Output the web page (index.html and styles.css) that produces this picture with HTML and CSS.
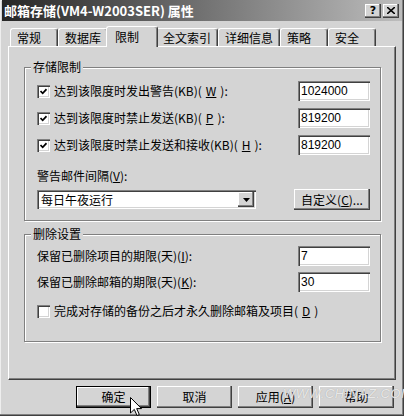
FILE: index.html
```html
<!DOCTYPE html>
<html>
<head lang="zh-CN">
  <meta charset="UTF-8">
  <title>邮箱存储 属性</title>
  <link rel="stylesheet" href="styles.css">
</head>
<body>
  <div class="window">
    <div class="titlebar">
      <span class="title">邮箱存储(VM4-W2003SER) 属性</span>
      <div class="cbtns">
        <span class="cbtn">?</span>
        <span class="cbtn">
          <svg width="8" height="7" viewBox="0 0 8 7"><path d="M0 0 L8 7 M8 0 L0 7" stroke="#000" stroke-width="1.6"/></svg>
        </span>
      </div>
    </div>

    <div class="content">
      <div class="tabs">
        <div class="tab">常规</div>
        <div class="tab">数据库</div>
        <div class="tab active">限制</div>
        <div class="tab">全文索引</div>
        <div class="tab">详细信息</div>
        <div class="tab">策略</div>
        <div class="tab">安全</div>
      </div>

      <div class="panel">
        <fieldset class="group limits">
          <legend>存储限制</legend>
          <div class="row">
            <label class="check"><span class="box"><svg width="7" height="7" viewBox="0 0 7 7"><path d="M0.5 3 L2.7 5.3 L6.5 1.2" fill="none" stroke="#000" stroke-width="1.7"/></svg></span>达到该限度时发出警告(KB)(<u>W</u>):</label>
            <span class="field">1024000</span>
          </div>
          <div class="row">
            <label class="check"><span class="box"><svg width="7" height="7" viewBox="0 0 7 7"><path d="M0.5 3 L2.7 5.3 L6.5 1.2" fill="none" stroke="#000" stroke-width="1.7"/></svg></span>达到该限度时禁止发送(KB)(<u>P</u>):</label>
            <span class="field">819200</span>
          </div>
          <div class="row">
            <label class="check"><span class="box"><svg width="7" height="7" viewBox="0 0 7 7"><path d="M0.5 3 L2.7 5.3 L6.5 1.2" fill="none" stroke="#000" stroke-width="1.7"/></svg></span>达到该限度时禁止发送和接收(KB)(<u>H</u>):</label>
            <span class="field">819200</span>
          </div>
          <div class="caption">警告邮件间隔(<u>V</u>):</div>
          <div class="row combo-row">
            <div class="select">
              <span class="select-text">每日午夜运行</span>
              <span class="drop"><svg width="7" height="4" viewBox="0 0 7 4"><path d="M0 0 H7 L3.5 4 Z" fill="#000"/></svg></span>
            </div>
            <div class="btn custom">自定义(<u>C</u>)...</div>
          </div>
        </fieldset>

        <fieldset class="group delete">
          <legend>删除设置</legend>
          <div class="row">
            <span>保留已删除项目的期限(天)(<u>I</u>):</span>
            <span class="field">7</span>
          </div>
          <div class="row">
            <span>保留已删除邮箱的期限(天)(<u>K</u>):</span>
            <span class="field">30</span>
          </div>
          <div class="row check-row">
            <label class="check"><span class="box"></span>完成对存储的备份之后才永久删除邮箱及项目(<u>D</u>)</label>
          </div>
        </fieldset>
      </div>

      <div class="actions">
        <div class="btn default">确定</div>
        <div class="btn">取消</div>
        <div class="btn">应用(<u>A</u>)</div>
        <div class="btn">帮助</div>
      </div>
    </div>

    <div class="watermark">WWW.CHINAZ.COM</div>
    <svg class="cursor" width="13" height="20" viewBox="0 0 13 20">
      <path d="M0.5 0.5 V16 L4.3 12.4 L7 18.5 L9.3 17.5 L6.7 11.6 H11.5 Z" fill="#fff" stroke="#000" stroke-width="1"/>
    </svg>
  </div>
</body>
</html>
```

FILE: styles.css
```css
* {
  margin: 0;
  padding: 0;
  box-sizing: border-box;
}

body {
  background: #d4d4d4;
  color: #000;
  font: 12px/14px "Noto Sans CJK SC", sans-serif;
}

u {
  text-decoration: underline;
}

.window {
  position: relative;
  width: 404px;
  height: 416px;
  padding: 0 2px 2px;
  overflow: hidden;
  box-shadow: inset -1px -1px #404040, inset -2px -2px #808080, inset 1px 1px #eeeeee;
}

/* title bar */
.titlebar {
  display: flex;
  align-items: center;
  justify-content: space-between;
  height: 21px;
  padding: 0 3px 0 2px;
  background: linear-gradient(to right, #262626, #bdbdbd);
  color: #fff;
}

.title {
  font-size: 13px;
  font-weight: bold;
  line-height: 21px;
  white-space: nowrap;
}

.cbtns {
  display: flex;
  gap: 2px;
}

.cbtn {
  display: flex;
  align-items: center;
  justify-content: center;
  width: 16px;
  height: 14px;
  background: #d4d4d4;
  color: #000;
  font: bold 11px/14px "DejaVu Sans", sans-serif;
  box-shadow: inset -1px -1px #404040, inset -2px -2px #808080, inset 1px 1px #fff;
}

.content {
  padding: 5px 6px 0;
}

/* tabs */
.tabs {
  display: flex;
  align-items: flex-end;
  height: 20px;
  padding-left: 2px;
}

.tab {
  position: relative;
  min-width: 48px;
  height: 18px;
  padding: 2px 6px 0;
  border: 1px solid #fff;
  border-bottom: 0;
  border-right-color: #404040;
  border-radius: 3px 3px 0 0;
  box-shadow: inset -1px 0 #808080;
  white-space: nowrap;
}

.tab.active {
  z-index: 1;
  min-width: 52px;
  height: 21px;
  margin: 0 -2px -1px;
  padding: 3px 8px 0;
  background: #d4d4d4;
}

/* page */
.panel {
  height: 334px;
  padding: 13px 14px 0 15px;
  border: 1px solid #fff;
  border-right-color: #404040;
  border-bottom-color: #404040;
  box-shadow: inset -1px -1px #808080;
}

.group {
  min-width: 0;
  border: 1px solid #808080;
  box-shadow: inset 1px 1px #fff, 1px 1px #fff;
}

.group legend {
  margin-left: -6px;
  padding: 0 2px;
  background: #d4d4d4;
  line-height: 14px;
}

.limits {
  padding: 7px 10px 10px 12px;
}

.delete {
  margin-top: 6px;
  padding: 5px 10px 20px 12px;
}

.row {
  display: flex;
  align-items: center;
  justify-content: space-between;
  height: 20px;
  white-space: nowrap;
}

.limits .row + .row {
  margin-top: 7px;
}

.delete .row + .row {
  margin-top: 6px;
}

.delete .check-row {
  margin-top: 9px !important;
}

.check {
  display: flex;
  align-items: center;
  gap: 4px;
}

.box {
  display: flex;
  align-items: center;
  justify-content: center;
  width: 13px;
  height: 13px;
  background: #fff;
  box-shadow: inset 1px 1px #808080, inset 2px 2px #404040, inset -1px -1px #fff, inset -2px -2px #d4d4d4;
}

.field {
  width: 72px;
  height: 20px;
  padding: 3px 0 0 3px;
  background: #fff;
  font: 12px/14px "Liberation Sans", sans-serif;
  box-shadow: inset 1px 1px #808080, inset 2px 2px #404040, inset -1px -1px #fff, inset -2px -2px #d4d4d4;
}

.caption {
  margin-top: 14px;
}

.limits .combo-row {
  height: 21px;
  margin-top: 6px;
}

.select {
  display: flex;
  align-items: center;
  justify-content: space-between;
  width: 219px;
  height: 19px;
  padding: 2px;
  background: #fff;
  box-shadow: inset 1px 1px #808080, inset 2px 2px #404040, inset -1px -1px #fff, inset -2px -2px #d4d4d4;
}

.select-text {
  padding-left: 2px;
}

.drop {
  display: flex;
  align-items: center;
  justify-content: center;
  width: 16px;
  height: 15px;
  background: #d4d4d4;
  box-shadow: inset -1px -1px #404040, inset -2px -2px #808080, inset 1px 1px #fff;
}

/* buttons */
.btn {
  display: flex;
  align-items: center;
  justify-content: center;
  width: 75px;
  height: 22px;
  white-space: nowrap;
  box-shadow: inset -1px -1px #404040, inset -2px -2px #808080, inset 1px 1px #fff;
}

.btn.custom {
  width: 76px;
  height: 21px;
}

.btn.default {
  box-shadow: inset 0 0 0 1px #000, inset -2px -2px #404040, inset -3px -3px #808080, inset 2px 2px #fff;
}

.actions {
  display: flex;
  justify-content: flex-end;
  gap: 6px;
  margin-top: 6px;
  padding-right: 2px;
}

/* overlays from the screenshot */
.watermark {
  position: absolute;
  left: 283px;
  top: 386px;
  color: rgba(255, 255, 255, 0.75);
  font: italic 13px/16px "Liberation Sans", sans-serif;
  letter-spacing: 0.5px;
  text-shadow: 0 0 1px #9a9a9a;
  pointer-events: none;
}

.cursor {
  position: absolute;
  left: 130px;
  top: 397px;
}
```
